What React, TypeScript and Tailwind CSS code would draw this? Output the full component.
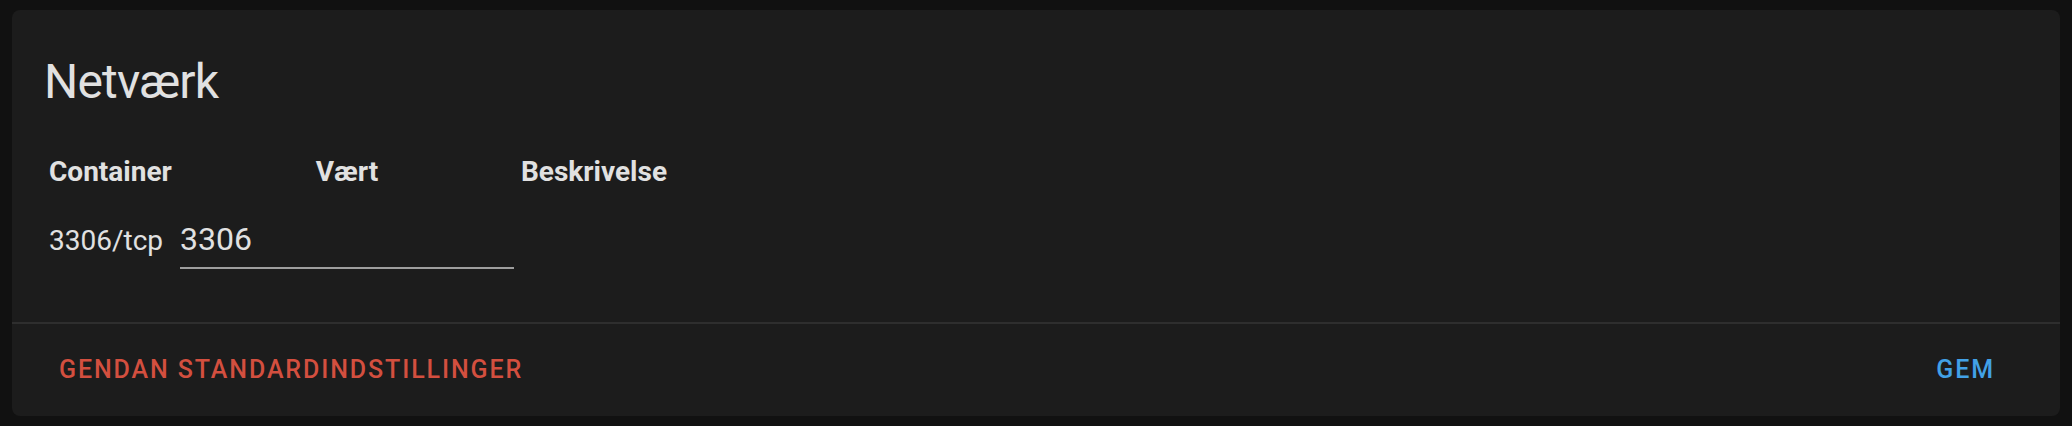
import React from 'react';

const ports = [{ container: '3306/tcp', host: '3306', description: '' }];

const App: React.FC = () => {
  return (
    <div className="min-h-[426px] bg-[#111111] px-[12px] py-[10px] font-['Roboto',sans-serif] text-[#e1e1e1]">
      <div className="rounded-[8px] bg-[#1c1c1c]">
        <h1 className="px-[32px] pt-[40px] text-[48px] font-normal leading-[64px] tracking-[-0.8px]">Netværk</h1>

        <div className="pl-[37px] pb-[53px] pt-[38px]">
          <div className="grid grid-cols-[131px_334px_auto] gap-y-[29px]">
            <div className="text-left text-[28px] font-bold leading-[40px]">Container</div>
            <div className="text-center text-[28px] font-bold leading-[40px]">Vært</div>
            <div className="pl-[7px] text-left text-[28px] font-bold leading-[40px]">Beskrivelse</div>

            {ports.map(port => (
              <React.Fragment key={port.container}>
                <div className="text-[28px] leading-[40px]">{port.container}</div>
                <div>
                  <input
                    type="text"
                    defaultValue={port.host}
                    className="h-[48px] w-[334px] border-b-2 border-[#9e9e9e] bg-transparent pb-[10px] text-[32px] text-[#e1e1e1] outline-none"
                  />
                </div>
                <div className="pl-[7px] text-[28px] leading-[40px]">{port.description}</div>
              </React.Fragment>
            ))}
          </div>
        </div>

        <div className="flex h-[94px] items-center justify-between border-t-2 border-[#2e2e2e] pl-[47px] pr-[65px]">
          <button className="text-[25px] font-medium uppercase tracking-[1.9px] text-[#d34f3f]">Gendan standardindstillinger</button>
          <button className="text-[25px] font-medium uppercase tracking-[1.9px] text-[#42a1e6]">Gem</button>
        </div>
      </div>
    </div>
  );
};

export default App;
